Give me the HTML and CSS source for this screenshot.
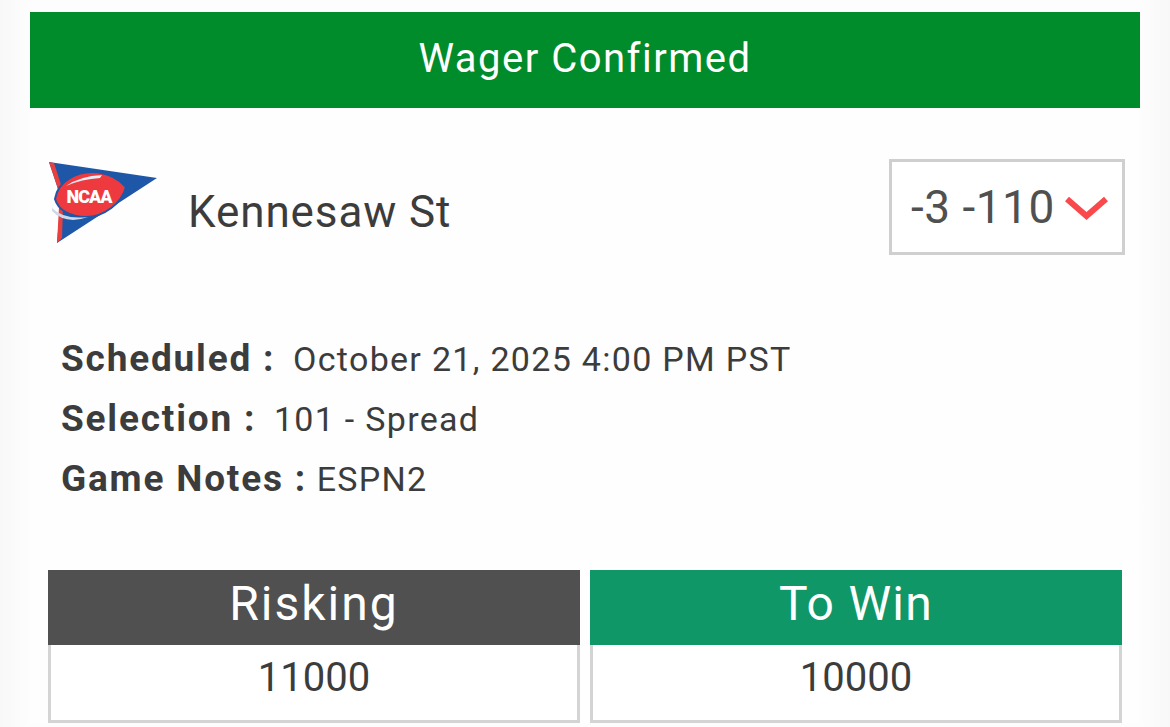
FILE: index.html
```html
<!DOCTYPE html>
<html lang="en">
<head>
    <meta charset="UTF-8">
    <meta name="viewport" content="width=device-width, initial-scale=1.0">
    <title>Wager Confirmed</title>
    <link rel="stylesheet" href="styles.css">
</head>
<body>
    <div class="ticket">
        <h1 class="ticket-title">Wager Confirmed</h1>
        <div class="team-row">
            <div class="team">
                <svg class="league-logo" width="110" height="84" viewBox="0 0 110 84">
                    <!-- pennant -->
                    <path d="M1 0 L109 16 L9 81 L12 45 L11 30 Z" fill="#1f57a8"/>
                    <path d="M1 0 L6 1 L15 29 L15 44 L14 76 L9 81 L11 45 L11 30 Z" fill="#e8403f"/>
                    <!-- football -->
                    <path d="M7 37 C10 18 30 10 44 10 C60 10 72 18 78 25 C74 41 56 55 38 55 C22 55 10 48 7 37 Z" fill="#ee3a3f" stroke="#1f57a8" stroke-width="2"/>
                    <path d="M18 24 Q32 14 54 13 L52 16 Q34 17 18 24 Z" fill="#e6ebf4"/>
                    <path d="M4 46 Q16 58 40 55 Q18 63 4 49 Z" fill="#cfd8e8"/>
                    <text class="logo-text" x="41" y="41" text-anchor="middle">NCAA</text>
                </svg>
                <span class="team-name">Kennesaw St</span>
            </div>
            <div class="line-box">
                <span>-3 -110</span>
                <svg class="chevron" width="46" height="28" viewBox="0 0 46 28">
                    <path d="M3 5 L22.500 22 L42 5" fill="none" stroke="#f9494c" stroke-width="6"/>
                </svg>
            </div>
        </div>
        <div class="details">
            <p class="spaced"><b>Scheduled :</b> October 21, 2025 4:00 PM PST</p>
            <p class="spaced"><b>Selection :</b> 101 - Spread</p>
            <p><b>Game Notes :</b> ESPN2</p>
        </div>
        <div class="amounts">
            <div class="amount">
                <div class="amount-head risk">Risking</div>
                <div class="amount-value">11000</div>
            </div>
            <div class="amount">
                <div class="amount-head win">To Win</div>
                <div class="amount-value">10000</div>
            </div>
        </div>
    </div>
</body>
</html>
```

FILE: styles.css
```css
html, body {
    height: 100%;
}
body {
    margin: 0;
    padding: 12px 30px 0;
    box-sizing: border-box;
    overflow: hidden;
    background: linear-gradient(to right, #f8f8f8 0, #fdfdfd 30px, #fdfdfd 1140px, #f8f8f8 100%);
    font-family: 'Roboto', 'Liberation Sans', sans-serif;
    color: #3c3c3c;
}
.ticket {
    background-color: #fefefe;
}
.ticket-title {
    margin: 0;
    height: 96px;
    line-height: 94px;
    background-color: #008c2b;
    color: #fff;
    text-align: center;
    font-size: 40px;
    font-weight: 400;
    letter-spacing: 1.5px;
}
.team-row {
    display: flex;
    justify-content: space-between;
    align-items: center;
    padding: 51px 15px 0 18px;
}
.team {
    display: flex;
    align-items: center;
    gap: 30px;
}
.league-logo {
    display: block;
    margin-bottom: 6px;
}
.logo-text {
    font-size: 18px;
    font-weight: 900;
    letter-spacing: -1px;
    fill: #fff;
    font-family: 'Roboto', sans-serif;
}
.team-name {
    font-size: 44px;
    margin-top: 10px;
    letter-spacing: 0.9px;
}
.line-box {
    display: flex;
    align-items: center;
    justify-content: space-between;
    box-sizing: border-box;
    width: 236px;
    height: 96px;
    padding: 0 12px 0 19px;
    border: 3px solid #cfcfcf;
    font-size: 46px;
    letter-spacing: 0.5px;
    color: #505050;
    background-color: #fff;
}
.chevron {
    margin-top: 2px;
}
.details {
    padding: 74px 0 0 31px;
}
.details p {
    margin: 0;
    height: 60px;
    line-height: 60px;
    font-size: 34px;
    letter-spacing: 1.3px;
}
.details b {
    font-size: 37px;
    font-weight: 700;
    letter-spacing: 1.8px;
}
.details .spaced b {
    margin-right: 8px;
}
.amounts {
    display: flex;
    gap: 10px;
    padding: 61px 18px 0;
}
.amount {
    width: 532px;
}
.amount-head {
    height: 75px;
    line-height: 68px;
    text-align: center;
    color: #fff;
    font-size: 48px;
}
.risk {
    background-color: #505050;
    letter-spacing: 2px;
}
.win {
    background-color: #0f9768;
    letter-spacing: 1.3px;
}
.amount-value {
    box-sizing: border-box;
    height: 78px;
    line-height: 66px;
    text-align: center;
    font-size: 40px;
    background-color: #fff;
    border: 3px solid #d4d4d4;
    border-top: none;
}
```
